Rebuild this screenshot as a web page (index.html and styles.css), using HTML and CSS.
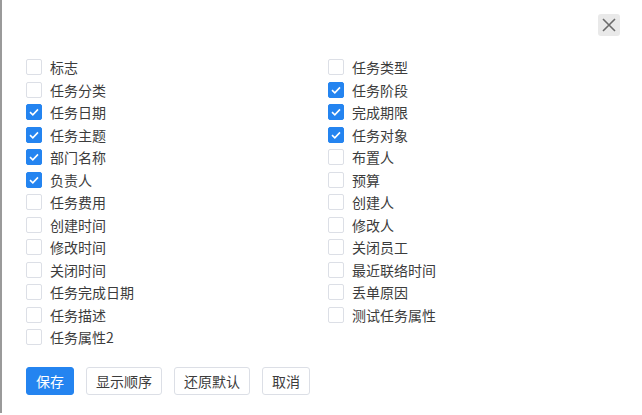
FILE: index.html
```html
<!DOCTYPE html>
<html lang="zh">
<head>
<meta charset="utf-8">
<link rel="stylesheet" href="styles.css">
</head>
<body>
<div class="dialog">
  <div class="header">
    <button class="close" aria-label="关闭">
      <svg width="14" height="14" viewBox="0 0 14 14"><path d="M1 1 L13 13 M13 1 L1 13" stroke="#6b6b6b" stroke-width="1.6" fill="none"/></svg>
    </button>
  </div>
  <div class="grid">
    <div class="col">
      <label class="item"><span class="box"></span>标志</label>
      <label class="item"><span class="box"></span>任务分类</label>
      <label class="item"><span class="box on"></span>任务日期</label>
      <label class="item"><span class="box on"></span>任务主题</label>
      <label class="item"><span class="box on"></span>部门名称</label>
      <label class="item"><span class="box on"></span>负责人</label>
      <label class="item"><span class="box"></span>任务费用</label>
      <label class="item"><span class="box"></span>创建时间</label>
      <label class="item"><span class="box"></span>修改时间</label>
      <label class="item"><span class="box"></span>关闭时间</label>
      <label class="item"><span class="box"></span>任务完成日期</label>
      <label class="item"><span class="box"></span>任务描述</label>
      <label class="item"><span class="box"></span>任务属性2</label>
    </div>
    <div class="col">
      <label class="item"><span class="box"></span>任务类型</label>
      <label class="item"><span class="box on"></span>任务阶段</label>
      <label class="item"><span class="box on"></span>完成期限</label>
      <label class="item"><span class="box on"></span>任务对象</label>
      <label class="item"><span class="box"></span>布置人</label>
      <label class="item"><span class="box"></span>预算</label>
      <label class="item"><span class="box"></span>创建人</label>
      <label class="item"><span class="box"></span>修改人</label>
      <label class="item"><span class="box"></span>关闭员工</label>
      <label class="item"><span class="box"></span>最近联络时间</label>
      <label class="item"><span class="box"></span>丢单原因</label>
      <label class="item"><span class="box"></span>测试任务属性</label>
    </div>
  </div>
  <div class="actions">
    <button class="btn primary">保存</button>
    <button class="btn">显示顺序</button>
    <button class="btn">还原默认</button>
    <button class="btn">取消</button>
  </div>
</div>
</body>
</html>
```
FILE: styles.css
```css
html, body {
  margin: 0;
  padding: 0;
  background: #fff;
}
body {
  font-family: "Noto Sans CJK SC", "Noto Sans", sans-serif;
  font-size: 14px;
  color: #3c3c3c;
}
.dialog {
  width: 640px;
  height: 413px;
  border-left: 2px solid #9a9a9a;
  box-sizing: content-box;
}
.header {
  display: flex;
  justify-content: flex-end;
  padding: 14px 22px 0 0;
  height: 22px;
}
.close {
  width: 22px;
  height: 22px;
  border: none;
  border-radius: 3px;
  background: #e9e9e9;
  padding: 0;
  display: flex;
  align-items: center;
  justify-content: center;
}
.grid {
  display: grid;
  grid-template-columns: 302px 1fr;
  padding-left: 24px;
  margin-top: 20px;
}
.col {
  display: flex;
  flex-direction: column;
}
.item {
  height: 22.5px;
  display: flex;
  align-items: center;
  line-height: 1;
}
.box {
  width: 16px;
  height: 16px;
  box-sizing: border-box;
  border: 1px solid #dcdfe6;
  border-radius: 2px;
  margin-right: 8px;
  background: #fff;
  flex: none;
}
.box.on {
  background: #2484f0 url("data:image/svg+xml;utf8,<svg xmlns='http://www.w3.org/2000/svg' width='16' height='16' viewBox='0 0 16 16'><path d='M4 8.2 L6.8 10.8 L12 5.4' stroke='white' stroke-width='1.6' fill='none'/></svg>") center/16px 16px no-repeat;
  border-color: #2484f0;
}
.actions {
  display: flex;
  gap: 12px;
  padding-left: 24px;
  margin-top: 18px;
}
.btn {
  height: 28px;
  padding: 0 9px;
  border: 1px solid #dcdfe6;
  border-radius: 3px;
  background: #fff;
  font-family: "Noto Sans CJK SC", "Noto Sans", sans-serif;
  font-size: 14px;
  color: #3c3c3c;
  line-height: 1;
}
.btn.primary {
  background: #2484f0;
  border-color: #2484f0;
  color: #fff;
}
```
